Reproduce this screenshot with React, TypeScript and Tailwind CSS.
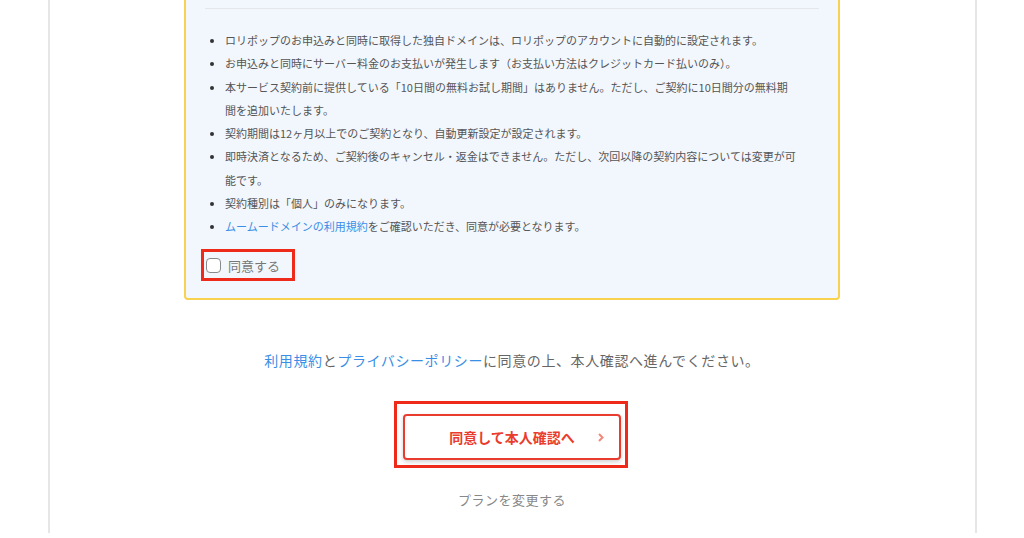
const notes: { text: React.ReactNode }[] = [
  { text: "ロリポップのお申込みと同時に取得した独自ドメインは、ロリポップのアカウントに自動的に設定されます。" },
  { text: "お申込みと同時にサーバー料金のお支払いが発生します（お支払い方法はクレジットカード払いのみ）。" },
  {
    text: (
      <>
        本サービス契約前に提供している「10日間の無料お試し期間」はありません。ただし、ご契約に10日間分の無料期
        <br />
        間を追加いたします。
      </>
    ),
  },
  { text: "契約期間は12ヶ月以上でのご契約となり、自動更新設定が設定されます。" },
  {
    text: (
      <>
        即時決済となるため、ご契約後のキャンセル・返金はできません。ただし、次回以降の契約内容については変更が可
        <br />
        能です。
      </>
    ),
  },
  { text: "契約種別は「個人」のみになります。" },
  {
    text: (
      <>
        <a className="text-[#3a8ee6]">ムームードメインの利用規約</a>をご確認いただき、同意が必要となります。
      </>
    ),
  },
];

export default function App() {
  return (
    <div
      className="flex h-[538px] justify-center overflow-hidden bg-white text-[#555]"
      style={{ fontFamily: '"Noto Sans CJK JP", "Noto Sans", sans-serif' }}
    >
      <div className="flex h-[533px] w-[929px] flex-col items-center border-x-2 border-[#e6e6e6]">
        {/* 注意事項 */}
        <div className="mt-[-20px] w-[656px] rounded-b-[4px] border-2 border-[#f8d24e] bg-[#f2f7fd] px-[19px] pt-[26px] pb-[17px]">
          <div className="h-px bg-[#e4e6ea]" />
          <ul className="mt-[20px] list-disc pl-[20px] pr-[6px] text-[11px] leading-[23.25px] text-[#555] marker:text-[#333]">
            {notes.map((n, i) => (
              <li key={i}>{n.text}</li>
            ))}
          </ul>
          <label className="mt-[11px] ml-[-4px] flex h-[32px] w-[94px] items-center border-[3px] border-[#ee2a1a] pl-[2px]">
            <span className="h-[15px] w-[15px] rounded-[4px] border-[1.5px] border-[#8a8a8a] bg-white" />
            <span className="ml-[7px] text-[13px] text-[#777]">同意する</span>
          </label>
        </div>

        <p className="mt-[50px] text-[14px] leading-[20px] tracking-[0.6px] text-[#666]">
          <a className="text-[#3a8ee6]">利用規約</a>と<a className="text-[#3a8ee6]">プライバシーポリシー</a>
          に同意の上、本人確認へ進んでください。
        </p>

        <div className="mt-[31px] ml-[-2px] border-[3px] border-[#ee2a1a] pt-[10px] pl-[6px] pr-[4px] pb-[5px]">
          <button
            type="button"
            className="grid h-[46px] w-[218px] grid-cols-[1fr_auto_1fr] items-center rounded-[4px] border-2 border-[#ea3c2e] bg-white shadow-[0_2px_4px_rgba(0,0,0,0.18)]"
          >
            <span />
            <span className="text-[14px] font-bold text-[#ea3c2e]">同意して本人確認へ</span>
            <span className="flex justify-end pr-[15px]">
              <svg width="6" height="9" viewBox="0 0 6 9" fill="none">
                <path d="M1 1l3.5 3.5L1 8" stroke="#f4877a" strokeWidth="2" />
              </svg>
            </span>
          </button>
        </div>

        <a className="mt-[23px] text-[13px] leading-[18px] tracking-[0.5px] text-[#888]">プランを変更する</a>
      </div>
    </div>
  );
}
